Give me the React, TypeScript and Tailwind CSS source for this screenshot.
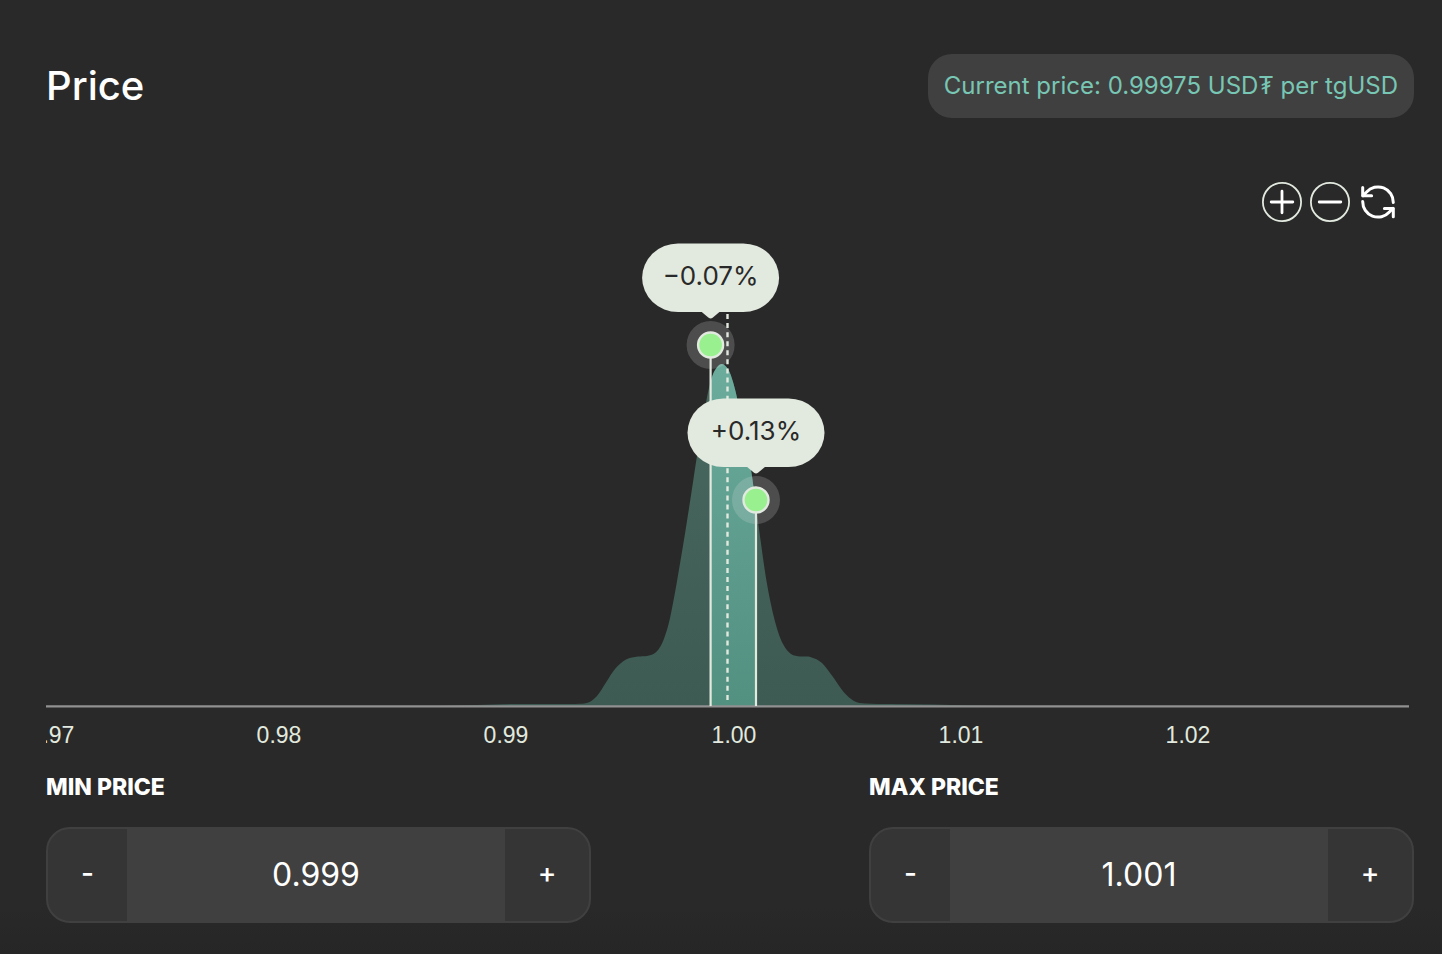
import { useState } from "react";

type Point = [number, number];

const BASELINE = 706;

const density: Point[] = [
  [440, 706], [477, 705], [512, 704], [560, 704], [580, 703.8], [589, 702.3], [597, 696], [606, 682.5], [615, 669],
  [626, 659.5], [638, 656.6], [647, 656], [655, 653], [662, 643.5], [668.6, 624], [674, 598],
  [679.6, 566], [685.6, 530], [691.2, 494], [697, 456], [706, 403], [710, 384], [714.5, 371],
  [721.7, 364], [728.5, 370], [733, 382], [737, 398], [751, 470], [759, 529], [767, 584],
  [775.7, 624], [783, 644], [791, 654], [800, 656.4], [811, 657.2], [822, 663], [833, 677],
  [843.6, 692], [854, 701], [865, 703.6], [890, 704], [933, 704.4], [970, 705.4], [1000, 706],
];

function smoothPath(points: Point[]): string {
  let d = `M${points[0][0]} ${points[0][1]}`;
  for (let i = 0; i < points.length - 1; i++) {
    const p0 = points[Math.max(0, i - 1)];
    const p1 = points[i];
    const p2 = points[i + 1];
    const p3 = points[Math.min(points.length - 1, i + 2)];
    const dx = (p2[0] - p1[0]) / 3;
    const m1 = (p2[1] - p0[1]) / (p2[0] - p0[0]);
    const m2 = (p3[1] - p1[1]) / (p3[0] - p1[0]);
    d += `C${p1[0] + dx} ${p1[1] + m1 * dx} ${p2[0] - dx} ${p2[1] - m2 * dx} ${p2[0]} ${p2[1]}`;
  }
  return `${d}Z`;
}

const areaPath = smoothPath(density);

const ticks = [
  { label: "0.97", x: 52 },
  { label: "0.98", x: 279 },
  { label: "0.99", x: 506 },
  { label: "1.00", x: 734 },
  { label: "1.01", x: 961 },
  { label: "1.02", x: 1188 },
];

function Handle({ x, y, label }: { x: number; y: number; label: string }) {
  return (
    <g>
      <line x1={x} x2={x} y1={y + 12} y2={BASELINE} stroke="#e2e9df" strokeWidth="2.2" />
      <circle cx={x} cy={y} r="24" fill="#e2e0df" fillOpacity="0.2" />
      <circle cx={x} cy={y} r="12.5" fill="#98f08e" stroke="#e2e9df" strokeWidth="2.4" />
      <rect x={x - 68.5} y={y - 101.5} width="137" height="68.5" rx="36" fill="#e2e9df" />
      <path d={`M${x - 10} ${y - 34}H${x + 10}L${x + 2} ${y - 27.2}Q${x} ${y - 25.8} ${x - 2} ${y - 27.2}Z`} fill="#e2e9df" />
      <text x={x} y={y - 60} textAnchor="middle" className="fill-[#292929] font-['Inter',sans-serif] text-[26px]">
        {label}
      </text>
    </g>
  );
}

function PriceChart() {
  return (
    <svg viewBox="46 222 1363 528" className="block w-full" role="img" aria-label="Liquidity by price">
      <defs>
        <linearGradient id="selected" gradientUnits="userSpaceOnUse" x1="0" x2="0" y1="364" y2="706">
          <stop offset="0" stopColor="#6bac9d" />
          <stop offset="1" stopColor="#529080" />
        </linearGradient>
        <linearGradient id="rest" gradientUnits="userSpaceOnUse" x1="0" x2="0" y1="364" y2="706">
          <stop offset="0" stopColor="#49695f" />
          <stop offset="1" stopColor="#3d5a53" />
        </linearGradient>
        <clipPath id="range">
          <rect x="711" y="340" width="45" height="366" />
        </clipPath>
      </defs>
      <path d={areaPath} fill="url(#rest)" />
      <path d={areaPath} fill="url(#selected)" clipPath="url(#range)" />
      <line x1="46" x2="1409" y1="706.4" y2="706.4" stroke="#929192" strokeWidth="2.2" />
      <line x1="727.5" x2="727.5" y1="314" y2="704" stroke="#e2e9df" strokeWidth="2.4" strokeDasharray="5 4.07" />
      <Handle x={710.6} y={345} label="−0.07%" />
      <Handle x={756} y={500} label="+0.13%" />
      {ticks.map((tick) => (
        <text
          key={tick.label}
          x={tick.x}
          y="743"
          textAnchor="middle"
          className="fill-[#e2e9df] font-['Liberation_Sans',sans-serif] text-[23px]"
        >
          {tick.label}
        </text>
      ))}
    </svg>
  );
}

function ChartControls() {
  return (
    <div className="mt-16 flex justify-end gap-2 pr-4">
      <button type="button" aria-label="Zoom in" className="size-10">
        <svg viewBox="0 0 40 40" fill="none" className="size-10">
          <circle cx="20" cy="20" r="19.1" stroke="#e2e9df" strokeWidth="1.8" />
          <path d="M20 9.2V30.8M9.2 20H30.8" stroke="#fff" strokeWidth="2.8" strokeLinecap="round" />
        </svg>
      </button>
      <button type="button" aria-label="Zoom out" className="size-10">
        <svg viewBox="0 0 40 40" fill="none" className="size-10">
          <circle cx="20" cy="20" r="19.1" stroke="#e2e9df" strokeWidth="1.8" />
          <path d="M9.2 20H30.8" stroke="#fff" strokeWidth="2.8" strokeLinecap="round" />
        </svg>
      </button>
      <button type="button" aria-label="Reset zoom" className="size-10">
        <svg viewBox="0 0 40 40" fill="none" stroke="#fff" strokeWidth="3" strokeLinecap="round" strokeLinejoin="round" className="size-10">
          <path d="M35.3 20.4A15.3 15.3 0 0 0 8.6 10L5 13.6" />
          <path d="M4.7 5.4V13.8H13.6" />
          <path d="M4.7 19.6A15.3 15.3 0 0 0 31.4 30L35 26.4" />
          <path d="M35.3 34.8V26.4H26.4" />
        </svg>
      </button>
    </div>
  );
}

function PriceField({ id, label, initial }: { id: string; label: string; initial: string }) {
  const [value, setValue] = useState(initial);
  const step = (delta: number) => setValue((v) => (Number(v) + delta).toFixed(3));
  return (
    <div>
      <label htmlFor={id} className="block text-[23px] leading-9 font-extrabold text-white">
        {label}
      </label>
      <div className="mt-[22px] flex h-24 overflow-hidden rounded-3xl border-2 border-[#404040] bg-[#353535] text-white">
        <button
          type="button"
          aria-label={`Decrease ${label.toLowerCase()}`}
          onClick={() => step(-0.001)}
          className="w-[79px] shrink-0 pb-1 text-[28px] font-medium"
        >
          -
        </button>
        <input
          id={id}
          type="text"
          inputMode="decimal"
          value={value}
          onChange={(e) => setValue(e.target.value)}
          className="w-0 min-w-0 grow bg-[#404040] text-center text-[32px] outline-none"
        />
        <button
          type="button"
          aria-label={`Increase ${label.toLowerCase()}`}
          onClick={() => step(0.001)}
          className="w-[84px] shrink-0 pb-1 text-[28px] font-medium"
        >
          +
        </button>
      </div>
    </div>
  );
}

export default function App() {
  return (
    <main className="min-h-screen bg-linear-to-b from-[#292929] from-95% to-[#262626] pt-[54px] pr-7 pb-[31px] pl-[46px] font-['Inter',sans-serif]">
      <header className="flex items-center justify-between">
        <h1 className="text-[40px] leading-[60px] font-medium text-white">Price</h1>
        <p className="flex h-16 items-center rounded-3xl bg-[#404040] px-4 text-2xl text-[#78c6b4]">
          Current price: 0.99975 USD₮ per tgUSD
        </p>
      </header>
      <ChartControls />
      <div className="pr-[5px]">
        <PriceChart />
      </div>
      <div className="mt-[19px] grid grid-cols-2 gap-[278px]">
        <PriceField id="min-price" label="MIN PRICE" initial="0.999" />
        <PriceField id="max-price" label="MAX PRICE" initial="1.001" />
      </div>
    </main>
  );
}
